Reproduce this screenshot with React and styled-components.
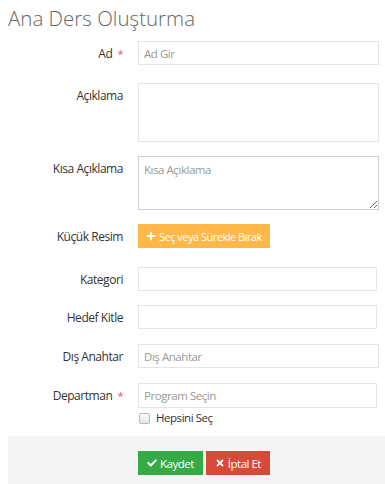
import React from "react";
import styled, { createGlobalStyle } from "styled-components";
import { FaPlus, FaCheck, FaTimes } from "react-icons/fa";

const colors = {
  text: "#333",
  title: "#666",
  border: "#e5e5e5",
  borderDark: "#cfcfcf",
  placeholder: "#999",
  required: "#f05a5a",
  yellow: "#ffb848",
  green: "#35aa47",
  red: "#d84a38",
  footer: "#f5f5f5",
};

const GlobalStyle = createGlobalStyle`
  html, body {
    margin: 0;
    padding: 0;
    background: #fff;
    font-family: "Open Sans", "Noto Sans", sans-serif;
    color: ${colors.text};
  }
  * { box-sizing: border-box; }
`;

const Page = styled.div`
  width: 385px;
  padding-left: 8px;
`;

const Title = styled.h3`
  margin: 0;
  padding-top: 4px;
  font-size: 20.5px;
  font-weight: 300;
  line-height: 28px;
  color: ${colors.title};
`;

const Form = styled.form`
  display: flex;
  flex-direction: column;
`;

const Group = styled.div`
  display: grid;
  grid-template-columns: 130px 1fr;
  margin-top: ${(p) => p.$top}px;
  padding-right: ${(p) => p.$right || 6}px;
`;

const Label = styled.label`
  text-align: right;
  padding-right: 15px;
  padding-top: 4px;
  font-size: 12px;
  letter-spacing: -0.45px;
  line-height: 17px;
  color: ${colors.text};
`;

const Star = styled.span`
  color: ${colors.required};
  margin-left: 5px;
  font-size: 11px;
`;

const Input = styled.input`
  display: block;
  width: 100%;
  height: ${(p) => p.$h || 24}px;
  border: 1px solid ${colors.border};
  padding: 0 5px;
  font-family: inherit;
  font-size: 11.5px;
  letter-spacing: -0.45px;
  color: ${colors.text};
  outline: none;
  &::placeholder { color: ${colors.placeholder}; }
`;

const TextArea = styled.textarea`
  display: block;
  width: 100%;
  height: ${(p) => p.$h}px;
  border: 1px solid ${(p) => (p.$dark ? colors.borderDark : colors.border)};
  padding: 5px 5px;
  font-family: inherit;
  font-size: 11.5px;
  letter-spacing: -0.45px;
  color: ${colors.text};
  resize: ${(p) => (p.$dark ? "both" : "none")};
  outline: none;
  &::placeholder { color: ${colors.placeholder}; }
`;

const Button = styled.button`
  display: inline-flex;
  align-items: center;
  gap: 3px;
  height: 24px;
  padding: 0 ${(p) => p.$px || 9}px;
  border: none;
  background: ${(p) => p.$bg};
  color: #fff;
  font-family: inherit;
  font-size: ${(p) => p.$fs || 11.5}px;
  letter-spacing: -0.5px;
  cursor: pointer;
  svg { font-size: 10px; }
`;

const CheckRow = styled.label`
  display: flex;
  align-items: center;
  gap: 6px;
  margin-top: 3px;
  padding-left: 1px;
  font-size: 11.5px;
  letter-spacing: -0.45px;
  line-height: 14px;
`;

const CheckBox = styled.span`
  width: 11px;
  height: 11px;
  border: 1px solid #b8b8b8;
  border-radius: 2px;
  background: linear-gradient(#fdfdfd, #e6e6e6);
`;

const Footer = styled.div`
  margin-top: 11px;
  background: ${colors.footer};
  padding: 15px 0 20px 130px;
  display: flex;
  gap: 3px;
`;

export default function App() {
  return (
    <Page>
      <GlobalStyle />
      <Title>Ana Ders Oluşturma</Title>
      <Form>
        <Group $top={9}>
          <Label>
            Ad<Star>*</Star>
          </Label>
          <Input placeholder="Ad Gir" />
        </Group>
        <Group $top={18}>
          <Label>Açıklama</Label>
          <TextArea $h={59} />
        </Group>
        <Group $top={14}>
          <Label>Kısa Açıklama</Label>
          <TextArea $h={54} $dark placeholder="Kısa Açıklama" />
        </Group>
        <Group $top={14}>
          <Label>Küçük Resim</Label>
          <div>
            <Button type="button" $bg={colors.yellow} $fs={11} $px={8}>
              <FaPlus /> Seç veya Sürekle Bırak
            </Button>
          </div>
        </Group>
        <Group $top={19} $right={8}>
          <Label>Kategori</Label>
          <Input />
        </Group>
        <Group $top={14} $right={8}>
          <Label>Hedef Kitle</Label>
          <Input />
        </Group>
        <Group $top={15}>
          <Label>Dış Anahtar</Label>
          <Input placeholder="Dış Anahtar" />
        </Group>
        <Group $top={15} $right={8}>
          <Label>
            Departman<Star>*</Star>
          </Label>
          <div>
            <Input $h={25} placeholder="Program Seçin" />
            <CheckRow>
              <CheckBox />
              Hepsini Seç
            </CheckRow>
          </div>
        </Group>
        <Footer>
          <Button type="button" $bg={colors.green}>
            <FaCheck /> Kaydet
          </Button>
          <Button type="button" $bg={colors.red}>
            <FaTimes /> İptal Et
          </Button>
        </Footer>
      </Form>
    </Page>
  );
}
